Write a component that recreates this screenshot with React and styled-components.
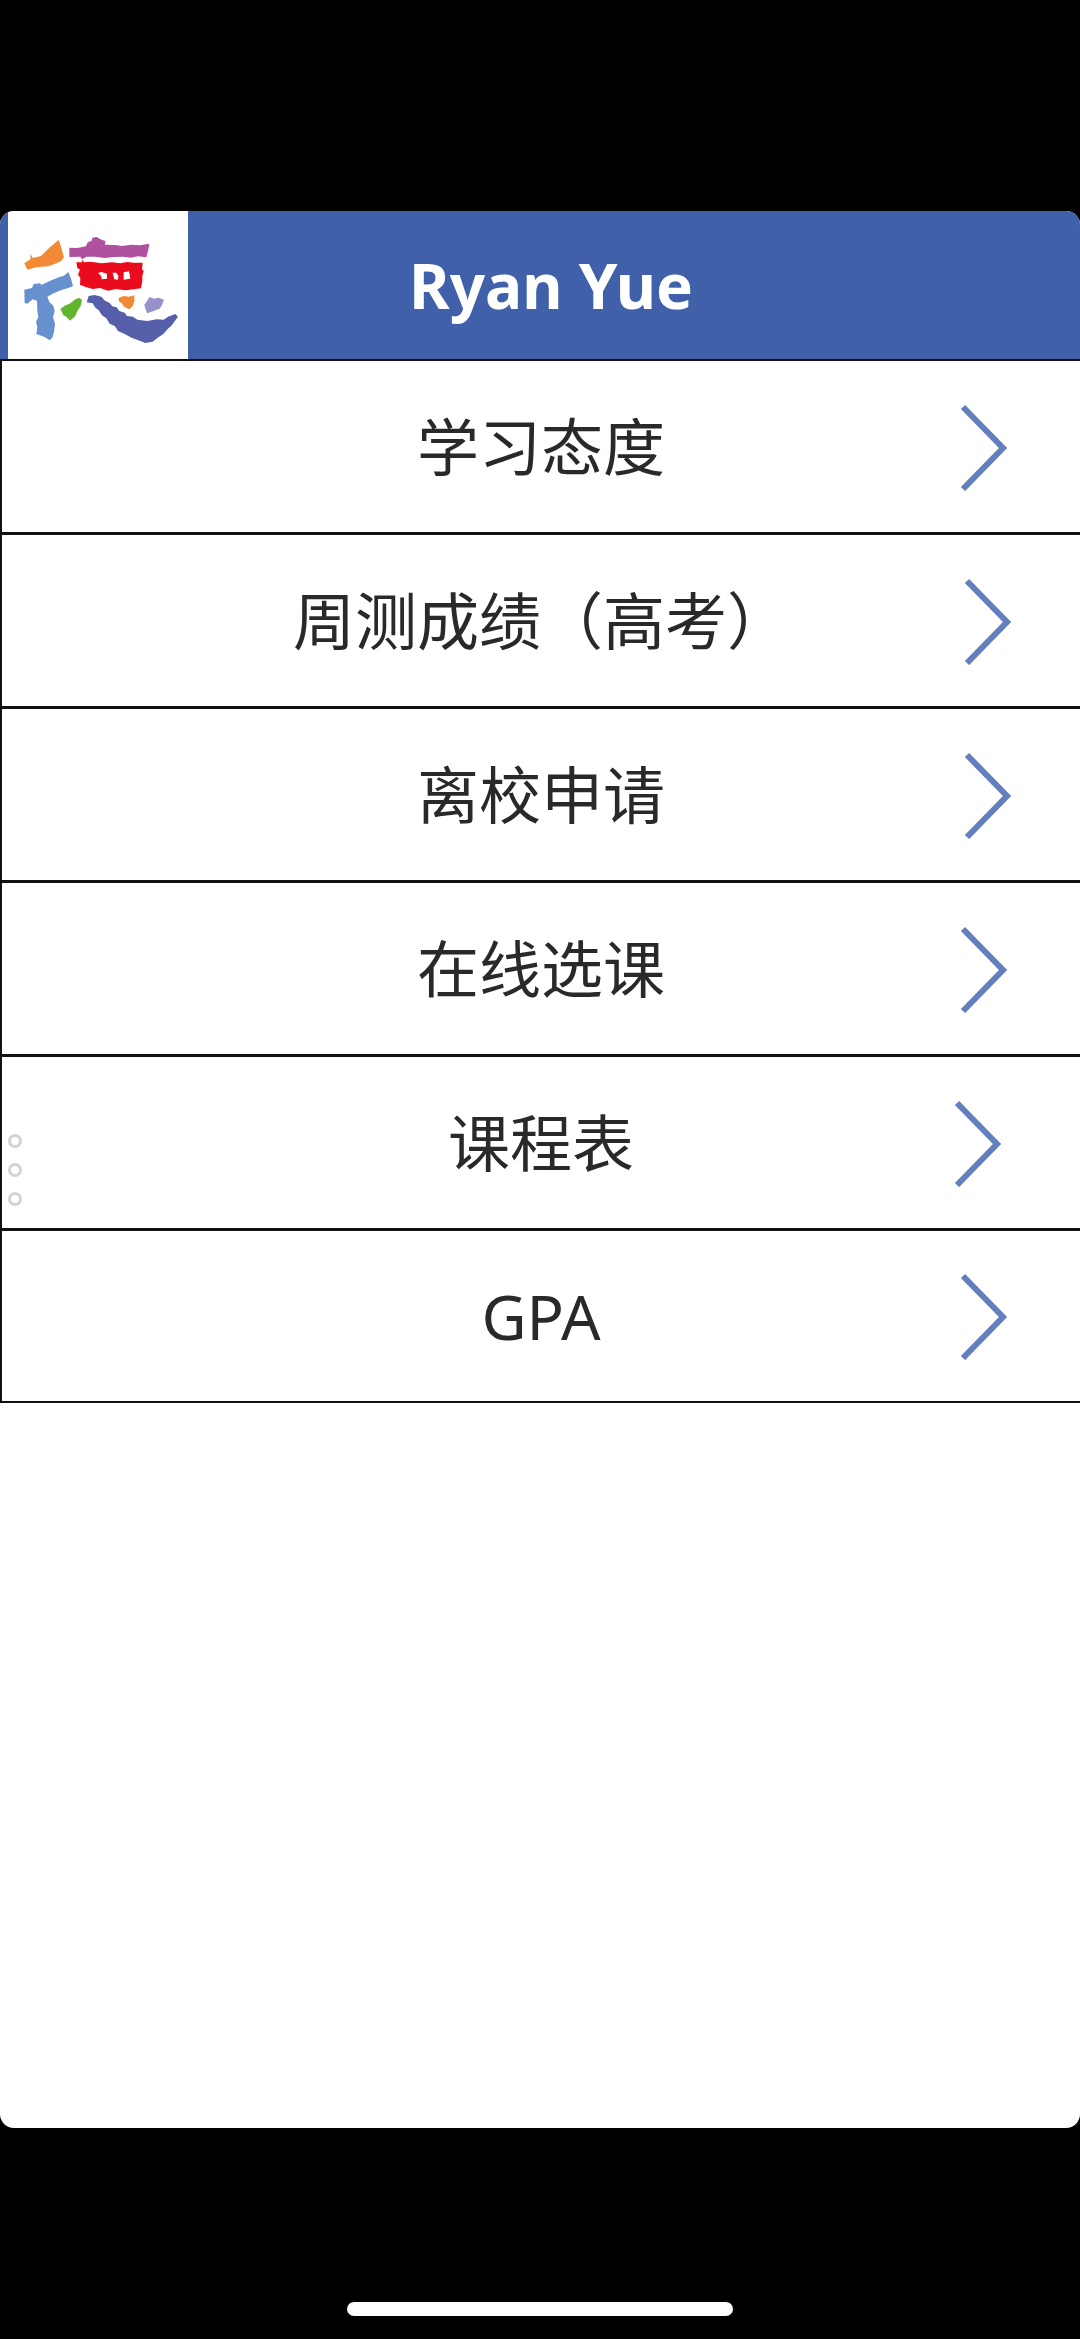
import React from "react";
import styled, { createGlobalStyle } from "styled-components";

const GlobalStyle = createGlobalStyle`
  *, *::before, *::after { box-sizing: border-box; }
  body {
    margin: 0;
    background: #000;
    font-family: "Noto Sans", "Noto Sans CJK SC", sans-serif;
  }
`;

const Screen = styled.div`
  display: flex;
  flex-direction: column;
  min-height: 100vh;
  padding-top: 211px;
  background: #000;
`;

const Panel = styled.main`
  position: relative;
  flex: 1;
  overflow: hidden;
  border-radius: 14px;
  background: #fff;
`;

const Header = styled.header`
  display: flex;
  align-items: center;
  height: 148px;
  padding: 0 166px 0 8px;
  background: #4061aa;
`;

const Logo = styled.svg`
  flex: none;
  width: 180px;
  height: 148px;
  background: #fff;
`;

const Title = styled.h1`
  flex: 1;
  margin: 0;
  color: #fff;
  font-size: 62px;
  font-weight: 700;
  line-height: 84px;
  text-align: center;
`;

const Menu = styled.nav`
  display: flex;
  flex-direction: column;
  border: solid #111;
  border-width: 2px 0 2px 2px;
`;

const MenuLink = styled.a`
  display: grid;
  grid-template-columns: 1fr auto 1fr;
  align-items: center;
  height: 174px;
  border-bottom: 3px solid #111;
  color: #2b2829;
  font-size: 62px;
  line-height: 90px;
  text-decoration: none;

  &:last-child {
    height: 170px;
    border-bottom: 0;
  }
`;

const Label = styled.span`
  grid-column: 2;
`;

const edges = { near: "68px", middle: "72px", far: "78px" };

const Chevron = styled.svg`
  justify-self: end;
  width: 48px;
  height: 88px;
  margin-right: ${({ $edge }) => edges[$edge]};
  fill: none;
  stroke: #637fbd;
  stroke-width: 6;
`;

const Handle = styled.div`
  position: absolute;
  top: 50%;
  left: 8px;
  display: grid;
  gap: 15px;
  transform: translateY(-50%);
`;

const Ring = styled.span`
  width: 14px;
  height: 14px;
  border: 3px solid #d3d3d3;
  border-radius: 50%;
`;

const Footer = styled.footer`
  display: flex;
  align-items: flex-end;
  justify-content: center;
  height: 211px;
  padding-bottom: 23px;
`;

const HomeIndicator = styled.div`
  width: 386px;
  height: 14px;
  border-radius: 7px;
  background: #fff;
`;

const items = [
  { label: "学习态度", edge: "middle" },
  { label: "周测成绩（高考）", edge: "near" },
  { label: "离校申请", edge: "near" },
  { label: "在线选课", edge: "middle" },
  { label: "课程表", edge: "far" },
  { label: "GPA", edge: "middle" },
];

function SchoolLogo() {
  return (
    <Logo viewBox="24 33 540 444" role="img" aria-label="德">
      <path fill="#f28a35" d="M73 190 L92 177 L90 162 L99 174 L123 168 L148 143 L176 120 L181 134 L186 151 L192 171 L183 184 L163 192 L145 199 L126 200 L108 202 L83 209 L78 202Z" />
      <path fill="#af519f" d="M208 143 L232 144 L258 139 L263 127 L275 122 L277 113 L290 111 L301 118 L316 123 L315 134 L345 135 L366 138 L393 134 L420 136 L448 131 L445 149 L439 172 L414 169 L392 173 L369 170 L342 171 L315 174 L285 170 L260 170 L246 178 L241 170 L208 171Z" />
      <path fill="#ea0b1c" d="M229 187 L246 187 L247 179 L252 187 L272 185 L304 190 L336 187 L361 190 L381 186 L401 188 L428 188 L426 208 L431 213 L427 227 L427 242 L423 265 L400 268 L376 271 L348 267 L324 272 L300 264 L278 267 L255 260 L240 254 L241 235 L234 223 L240 209 L232 204Z" />
      <path fill="#fff" d="M294 219 L304 216 L321 221 L321 236 L305 238 L304 229Z M338 218 L349 218 L355 227 L354 239 L343 238Z M371 217 L387 214 L391 236 L371 239Z" />
      <path fill="#6790cf" d="M73 269 L96 264 L101 252 L119 250 L125 254 L151 242 L176 232 L192 227 L205 216 L213 236 L219 259 L202 265 L182 271 L161 280 L142 290 L148 306 L160 317 L164 334 L159 351 L165 371 L162 396 L157 413 L149 421 L134 411 L109 402 L112 380 L108 367 L115 351 L112 333 L111 302 L98 298 L82 311 L74 309Z" />
      <path fill="#62b52b" d="M181 327 L194 317 L211 310 L224 299 L237 293 L246 299 L242 318 L232 333 L226 348 L210 362 L199 350 L190 346Z" />
      <path fill="#565fa9" d="M260 307 L266 288 L284 285 L304 290 L315 302 L328 308 L337 319 L350 322 L358 333 L374 338 L381 348 L399 350 L412 359 L442 363 L470 358 L491 359 L504 350 L526 342 L534 350 L525 362 L514 377 L503 387 L490 402 L473 413 L458 425 L436 429 L415 421 L396 414 L374 402 L354 393 L344 378 L329 371 L319 355 L306 346 L296 331 L285 322 L278 310Z" />
      <path fill="#f28a35" d="M355 294 L372 288 L386 290 L403 286 L403 304 L398 319 L388 328 L372 320 L365 309 L358 306Z" />
      <path fill="#9892cb" d="M441 303 L448 291 L462 296 L476 293 L492 299 L486 315 L479 326 L461 333 L442 340 L436 326 L433 314Z" />
    </Logo>
  );
}

export default function App() {
  return (
    <>
      <GlobalStyle />
      <Screen>
        <Panel>
          <Header>
            <SchoolLogo />
            <Title>Ryan Yue</Title>
          </Header>
          <Menu>
            {items.map(({ label, edge }) => (
              <MenuLink key={label} href="#">
                <Label>{label}</Label>
                <Chevron $edge={edge} viewBox="0 0 48 88" aria-hidden="true">
                  <path d="M3 4 L43 45 L3 86" />
                </Chevron>
              </MenuLink>
            ))}
          </Menu>
          <Handle>
            <Ring />
            <Ring />
            <Ring />
          </Handle>
        </Panel>
        <Footer>
          <HomeIndicator />
        </Footer>
      </Screen>
    </>
  );
}
